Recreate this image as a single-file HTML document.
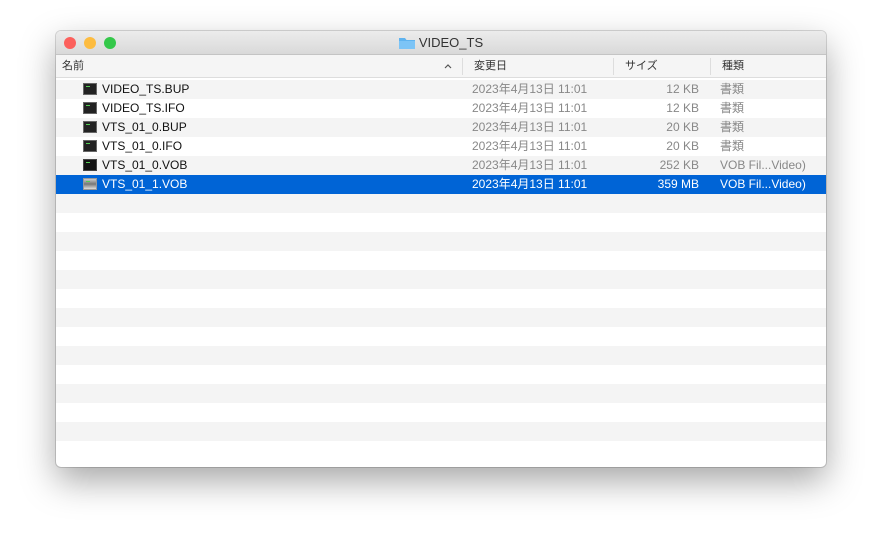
<!DOCTYPE html><html><head><meta charset="utf-8"><style>
*{margin:0;padding:0;box-sizing:border-box}
body{width:882px;height:548px;background:#fff;font-family:"Liberation Sans","Noto Sans CJK JP",sans-serif;position:relative;overflow:hidden}
.win{position:absolute;left:56px;top:31px;width:770px;height:436px;background:#fff;border-radius:5px;overflow:hidden;box-shadow:0 14px 35px rgba(0,0,0,.35),0 0 0 1px rgba(0,0,0,.15)}
.tb{height:24px;background:linear-gradient(#ececec,#d9d9d9);border-bottom:1px solid #c4c4c4;position:relative}
.dot{position:absolute;top:6px;width:12px;height:12px;border-radius:50%}
.title{position:absolute;left:0;right:0;top:0;line-height:24px;text-align:center;font-size:13px;color:#333}
.hd{height:23px;background:#f5f5f5;border-bottom:1px solid #ddd;position:relative;font-size:11px;color:#333}
.hd span{position:absolute;top:0;line-height:22px;height:22px}
.sep{position:absolute;top:3px;width:1px;height:17px;background:#ddd}
.rows{position:absolute;top:49px;left:0;right:0}
.r{height:19px;position:relative;font-size:12px;color:#888;line-height:19px}
.r:nth-child(odd){background:#f4f4f4}
.r span{position:absolute;top:0;height:19px;line-height:19px}
.r .n{left:46px;color:#111}
.r .d{left:416px}
.r .s{right:127px}
.r .k{left:664px}
.r i{position:absolute;left:27px;top:3px;width:14px;height:12px;background:#222;border:1px solid #666}
.r i:after{content:"";position:absolute;left:2px;top:2px;width:4px;height:1px;background:#5c5}
.sel{background:#0064d6!important}
.sel span{color:#fff!important}
</style></head><body>
<div class="win">
<div class="tb">
<div class="dot" style="left:8px;background:#fc605c"></div>
<div class="dot" style="left:28px;background:#fdbc40"></div>
<div class="dot" style="left:48px;background:#34c84a"></div>
<div class="title"><svg width="16" height="13" style="vertical-align:-2px;margin-right:4px"><path d="M0 2h6l1.5 2H16v9H0z" fill="#5fb3ef"/><path d="M0 5h16v8H0z" fill="#7cc4f6"/></svg>VIDEO_TS</div>
</div>
<div class="hd"><span style="left:6px">名前</span><svg style="position:absolute;left:388px;top:8px" width="8" height="6"><path d="M1 5L4 2L7 5" stroke="#555" stroke-width="1.2" fill="none"/></svg>
<div class="sep" style="left:406px"></div><span style="left:418px">変更日</span>
<div class="sep" style="left:557px"></div><span style="left:569px">サイズ</span>
<div class="sep" style="left:654px"></div><span style="left:666px">種類</span></div>
<div class="rows">
<div class="r"><i></i><span class="n">VIDEO_TS.BUP</span><span class="d">2023年4月13日 11:01</span><span class="s">12 KB</span><span class="k">書類</span></div>
<div class="r"><i></i><span class="n">VIDEO_TS.IFO</span><span class="d">2023年4月13日 11:01</span><span class="s">12 KB</span><span class="k">書類</span></div>
<div class="r"><i></i><span class="n">VTS_01_0.BUP</span><span class="d">2023年4月13日 11:01</span><span class="s">20 KB</span><span class="k">書類</span></div>
<div class="r"><i></i><span class="n">VTS_01_0.IFO</span><span class="d">2023年4月13日 11:01</span><span class="s">20 KB</span><span class="k">書類</span></div>
<div class="r"><i style="background:#111;border-color:#444"></i><span class="n">VTS_01_0.VOB</span><span class="d">2023年4月13日 11:01</span><span class="s">252 KB</span><span class="k">VOB Fil...Video)</span></div>
<div class="r sel"><i style="background:linear-gradient(#ccc,#777,#ddd);border-color:#999"></i><span class="n">VTS_01_1.VOB</span><span class="d">2023年4月13日 11:01</span><span class="s">359 MB</span><span class="k">VOB Fil...Video)</span></div>
<div class="r"></div><div class="r"></div><div class="r"></div><div class="r"></div><div class="r"></div><div class="r"></div><div class="r"></div><div class="r"></div><div class="r"></div><div class="r"></div><div class="r"></div><div class="r"></div><div class="r"></div><div class="r"></div>
</div>
</div>
</body></html>
